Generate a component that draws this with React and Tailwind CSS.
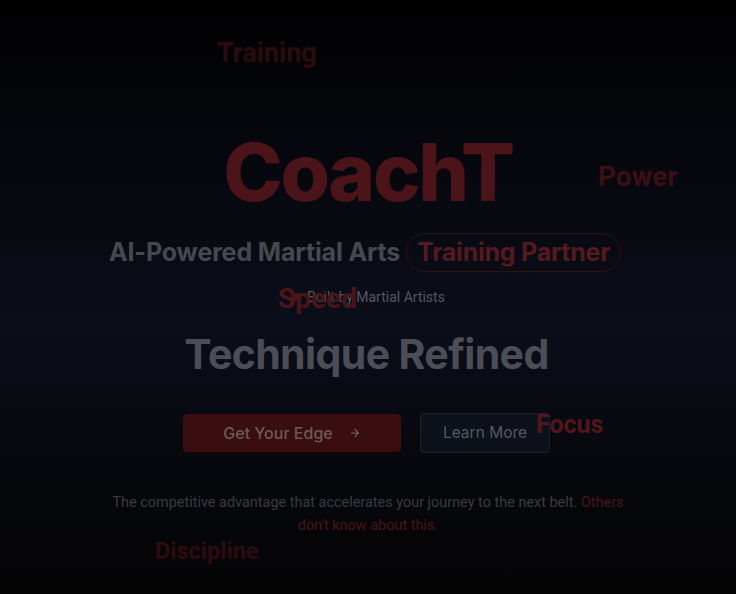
import React from "react";

const roboto = { fontFamily: "Roboto, 'Liberation Sans', sans-serif" };

export default function App() {
  return (
    <div
      className="relative h-[594px] w-full overflow-hidden bg-[linear-gradient(180deg,#010102_0%,#06070d_25%,#0b0e19_55%,#07080d_78%,#040405_100%)]"
    >
      {/* floating words */}
      <div className="absolute left-[217px] top-[40px] text-[27px] font-bold leading-none text-[#2c0b0f] font-['Roboto']">Training</div>
      <div className="absolute left-[598px] top-[163px] text-[28px] font-bold leading-none text-[#3b1015] font-['Roboto']">Power</div>
      <div className="absolute left-[155px] top-[540px] text-[23.5px] font-bold leading-none text-[#2e0b10] font-['Roboto']">Discipline</div>

      <div className="relative flex flex-col items-center pt-[132px] font-['Inter']">
        <h1 className="text-[80px] font-extrabold leading-none tracking-[-0.03em] text-[#4a1419]">CoachT</h1>

        <div className="mt-[21px] flex items-center gap-[6px] pr-[6px]">
          <span className="text-[25px] font-bold tracking-[-0.005em] text-[#464850]">AI-Powered Martial Arts</span>
          <span className="flex h-[39px] items-center rounded-full border border-[#34100f] px-[10px] text-[25px] font-bold tracking-[-0.01em] text-[#55191f]">
            Training Partner
          </span>
        </div>

        <div className="relative mt-[15px] flex h-[20px] items-center gap-[8px] text-[14px] text-[#55575e]" style={roboto}>
          <span className="h-[8px] w-[8px] rounded-full bg-[#4a1519]"></span>
          <span>Built by Martial Artists</span>
        </div>

        <h2 className="mt-[27px] pr-[3px] text-[41px] font-bold leading-none tracking-[-0.015em] text-[#4b4e56]">Technique Refined</h2>

        <div className="mt-[38px] flex items-center gap-[19px] pr-[3px]">
          <button className="flex h-[38px] w-[218px] items-center justify-center gap-[16px] rounded-[4px] bg-[#3a0d10] text-[16px] font-medium text-[#6b5a5d]">
            <span>Get Your Edge</span>
            <svg width="12" height="12" viewBox="0 0 24 24" fill="none" stroke="#6b5a5d" strokeWidth="2.5" strokeLinecap="round" strokeLinejoin="round">
              <path d="M5 12h14" />
              <path d="M12 5l7 7-7 7" />
            </svg>
          </button>
          <button className="flex h-[40px] w-[130px] items-center justify-center rounded-[4px] border border-[#1b222e] bg-[#0c111a] text-[15.5px] text-[#55585f]">
            Learn More
          </button>
        </div>

        <p className="mt-[38px] max-w-[530px] text-center text-[14.45px] font-normal leading-[23px] text-[#393b41]" style={roboto}>
          The competitive advantage that accelerates your journey to the next belt.{" "}
          <span className="text-[#4a151a]">Others don't know about this.</span>
        </p>
      </div>

      <div className="absolute left-[278px] top-[285px] text-[28px] font-bold leading-none text-[#4a151a] font-['Roboto']">Speed</div>
      <div className="absolute left-[536px] top-[412px] text-[25px] font-bold leading-none text-[#52161c] font-['Roboto']">Focus</div>
    </div>
  );
}
